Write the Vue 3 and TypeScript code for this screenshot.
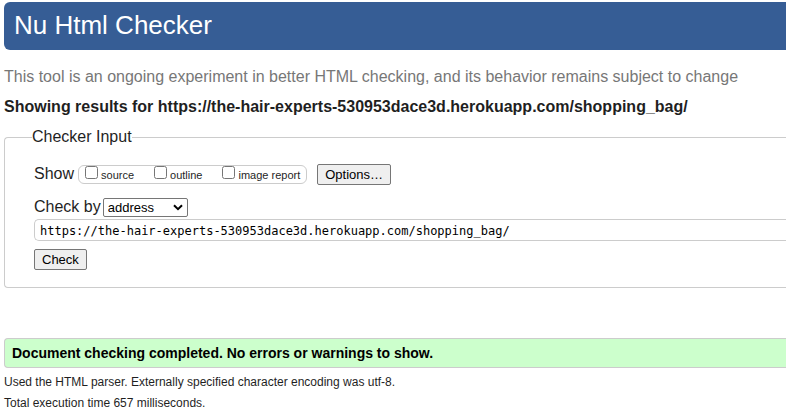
<script setup lang="ts">
import { ref } from 'vue'

interface ShowOption {
  id: string
  label: string
  checked: boolean
}

const showOptions = ref<ShowOption[]>([
  { id: 'show-source', label: 'source', checked: false },
  { id: 'show-outline', label: 'outline', checked: false },
  { id: 'show-image-report', label: 'image report', checked: false },
])
const method = ref('address')
const address = ref('https://the-hair-experts-530953dace3d.herokuapp.com/shopping_bag/')
const checkedAddress = address.value
</script>

<template>
  <div class="page">
    <header class="banner">
      <h1>Nu Html Checker</h1>
    </header>
    <p class="note">This tool is an ongoing experiment in better HTML checking, and its behavior remains subject to change</p>
    <h2>Showing results for {{ checkedAddress }}</h2>

    <form @submit.prevent>
      <fieldset class="checker">
        <legend>Checker Input</legend>
        <div class="row show-row">
          <span>Show</span>
          <div class="options">
            <div v-for="option in showOptions" :key="option.id" class="option">
              <input :id="option.id" v-model="option.checked" type="checkbox" />
              <label :for="option.id">{{ option.label }}</label>
            </div>
          </div>
          <button type="button" class="more">Options…</button>
        </div>
        <div class="row method-row">
          <label for="method">Check by</label>
          <div class="select-wrap">
            <select id="method" v-model="method">
              <option value="address">address</option>
              <option value="file upload">file upload</option>
              <option value="text input">text input</option>
            </select>
            <svg class="chevron" viewBox="0 0 10 7" width="10" height="7" aria-hidden="true">
              <path d="M1 1.2 5 5.2 9 1.2" fill="none" stroke="#000" stroke-width="2" />
            </svg>
          </div>
        </div>
        <input v-model="address" class="address" type="url" aria-label="Address" spellcheck="false" />
        <button type="submit">Check</button>
      </fieldset>
    </form>

    <p class="success">Document checking completed. No errors or warnings to show.</p>
    <p class="detail">Used the HTML parser. Externally specified character encoding was utf-8.</p>
    <p class="detail">Total execution time 657 milliseconds.</p>
  </div>
</template>

<style>
body {
  background: #fff;
}
</style>

<style scoped>
.page {
  padding: 2px 0 0 4px;
  color: #1f1f1f;
  font: 16px/20px "Liberation Sans", Arial, sans-serif;
}

.banner {
  padding: 7px 10px 9px;
  border-radius: 6px 0 0 6px;
  background: #365d95;
  color: #fff;
}

h1 {
  margin: 0;
  font-size: 26px;
  font-weight: 400;
  line-height: 32px;
}

.note {
  margin: 17px 0 10px;
  color: #777;
}

h2 {
  margin: 0 0 10px;
  font-size: 16px;
  font-weight: 700;
}

.checker {
  min-width: 0;
  margin: 0;
  padding: 16px 0 17px 29px;
  border: 1px solid #ccc;
  border-right: 0;
  border-radius: 4px 0 0 4px;
}

legend {
  margin-left: -2px;
  padding: 0;
}

.row {
  display: flex;
  align-items: center;
}

.show-row {
  gap: 4px;
  height: 22px;
  margin-bottom: 12px;
}

.options {
  display: flex;
  box-sizing: border-box;
  gap: 20px;
  height: 19px;
  padding: 0 6px;
  border: 1px solid #ccc;
  border-radius: 6px;
  font-size: 11px;
  line-height: 19px;
}

.option {
  display: flex;
  align-items: flex-start;
  gap: 3px;
}

.option input {
  width: 13px;
  height: 13px;
  margin: 0;
}

.more {
  margin-left: 6px;
}

.method-row {
  gap: 2px;
  height: 20px;
  margin-bottom: 2px;
}

.select-wrap {
  display: grid;
  align-items: center;
}

.select-wrap > * {
  grid-area: 1 / 1;
}

select {
  width: 85px;
  height: 19px;
  padding: 0 4px;
  border: 1px solid #767676;
  border-radius: 2px;
  appearance: none;
  background: #fff;
  color: #000;
  font: 13px/17px "Liberation Sans", Arial, sans-serif;
}

.chevron {
  justify-self: end;
  margin-right: 5px;
  pointer-events: none;
}

.address {
  display: block;
  box-sizing: border-box;
  width: 100%;
  height: 22px;
  margin: 0 0 8px;
  padding: 1px 5px 0;
  border: 1px solid #ccc;
  border-right: 0;
  border-radius: 5px 0 0 5px;
  outline: 0;
  background: #fff;
  color: #000;
  font: 12px/20px "DejaVu Sans Mono", monospace;
}

button {
  display: block;
  height: 21px;
  padding: 0 7px;
  border: 1px solid #767676;
  border-radius: 2px;
  background: #efefef;
  color: #000;
  font: 13px/19px "Liberation Sans", Arial, sans-serif;
}

.success {
  margin: 50px 0 4px;
  padding: 4px 7px;
  border: 1px solid #ccc;
  border-right: 0;
  border-radius: 4px 0 0 4px;
  background: #cfc;
  color: #000;
  font-size: 14px;
  font-weight: 700;
}

.detail {
  margin: 0;
  font-size: 12px;
  line-height: 21px;
}
</style>
